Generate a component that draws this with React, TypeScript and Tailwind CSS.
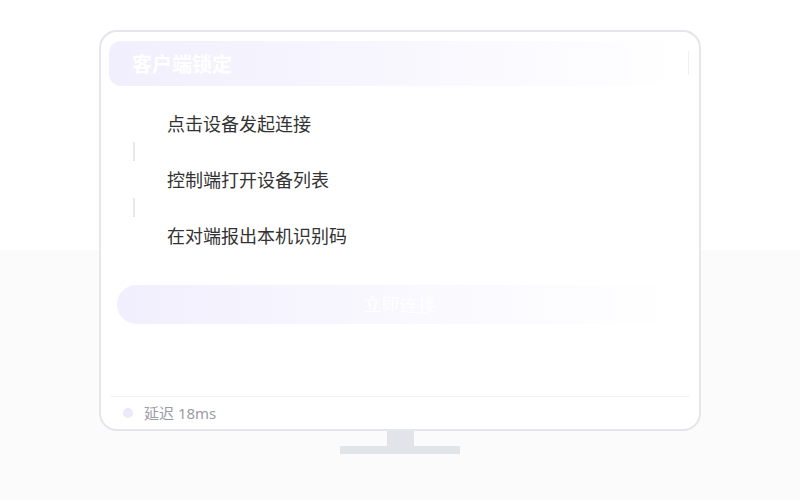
import React from "react";

const font = { fontFamily: '"Noto Sans CJK SC", "Noto Sans", sans-serif' };

export default function App() {
  const steps = ["点击设备发起连接", "控制端打开设备列表", "在对端报出本机识别码"];
  return (
    <div
      className="w-[800px] h-[500px] bg-[linear-gradient(to_bottom,#ffffff_250px,#fbfbfc_250px)] flex flex-col items-center pt-[30px]"
      style={font}
    >
      <div className="w-[602px] h-[401px] rounded-[18px] border-2 border-[#e4e6ea] bg-white flex flex-col">
        <div className="mt-[9px] ml-[8px] mr-[10px] h-[45px] rounded-[12px] bg-gradient-to-r from-[#f1effd] via-[#f8f7fe] to-white flex items-center pl-[23px] relative">
          <span className="text-[20px] font-bold text-white leading-none">客户端锁定</span>
          <span className="absolute right-[0px] top-[10px] w-[1px] h-[24px] bg-[#eef0f3]" />
        </div>
        <div className="mt-[25px] flex flex-col">
          {steps.map((s, i) => (
            <div key={s} className="flex flex-col">
              <div className="h-[24px] flex items-center pl-[66px] text-[18px] leading-[24px] text-[#333333]">{s}</div>
              {i < steps.length - 1 && (
                <div className="ml-[32px] mt-[7px] mb-[6px] w-[2px] h-[19px] bg-[#e6e8ec]" />
              )}
            </div>
          ))}
        </div>
        <div className="mt-[38px] mx-[16px] h-[39px] rounded-full bg-gradient-to-r from-[#f1effd] via-[#f9f8fe] to-white flex items-center justify-center relative">
          <span className="text-[18px] text-white leading-none" style={{ fontFamily: "serif" }}>立即连接</span>
        </div>
        <div className="flex-1" />
        <div className="mx-[10px] border-t border-[#eef0f3] h-[33px] flex items-center pl-[12px] gap-[11px]">
          <span className="w-[10px] h-[10px] rounded-full bg-[#ece9fb]" />
          <span
            className="text-[15px] text-[#9a9ca3] leading-none"
            style={{ fontFamily: '"Noto Sans", "Noto Sans CJK SC", sans-serif' }}
          >
            延迟 18ms
          </span>
        </div>
      </div>
      <div className="w-[27px] h-[15px] bg-[#e1e4e8]" />
      <div className="w-[120px] h-[8px] bg-[#e1e4e8]" />
    </div>
  );
}
